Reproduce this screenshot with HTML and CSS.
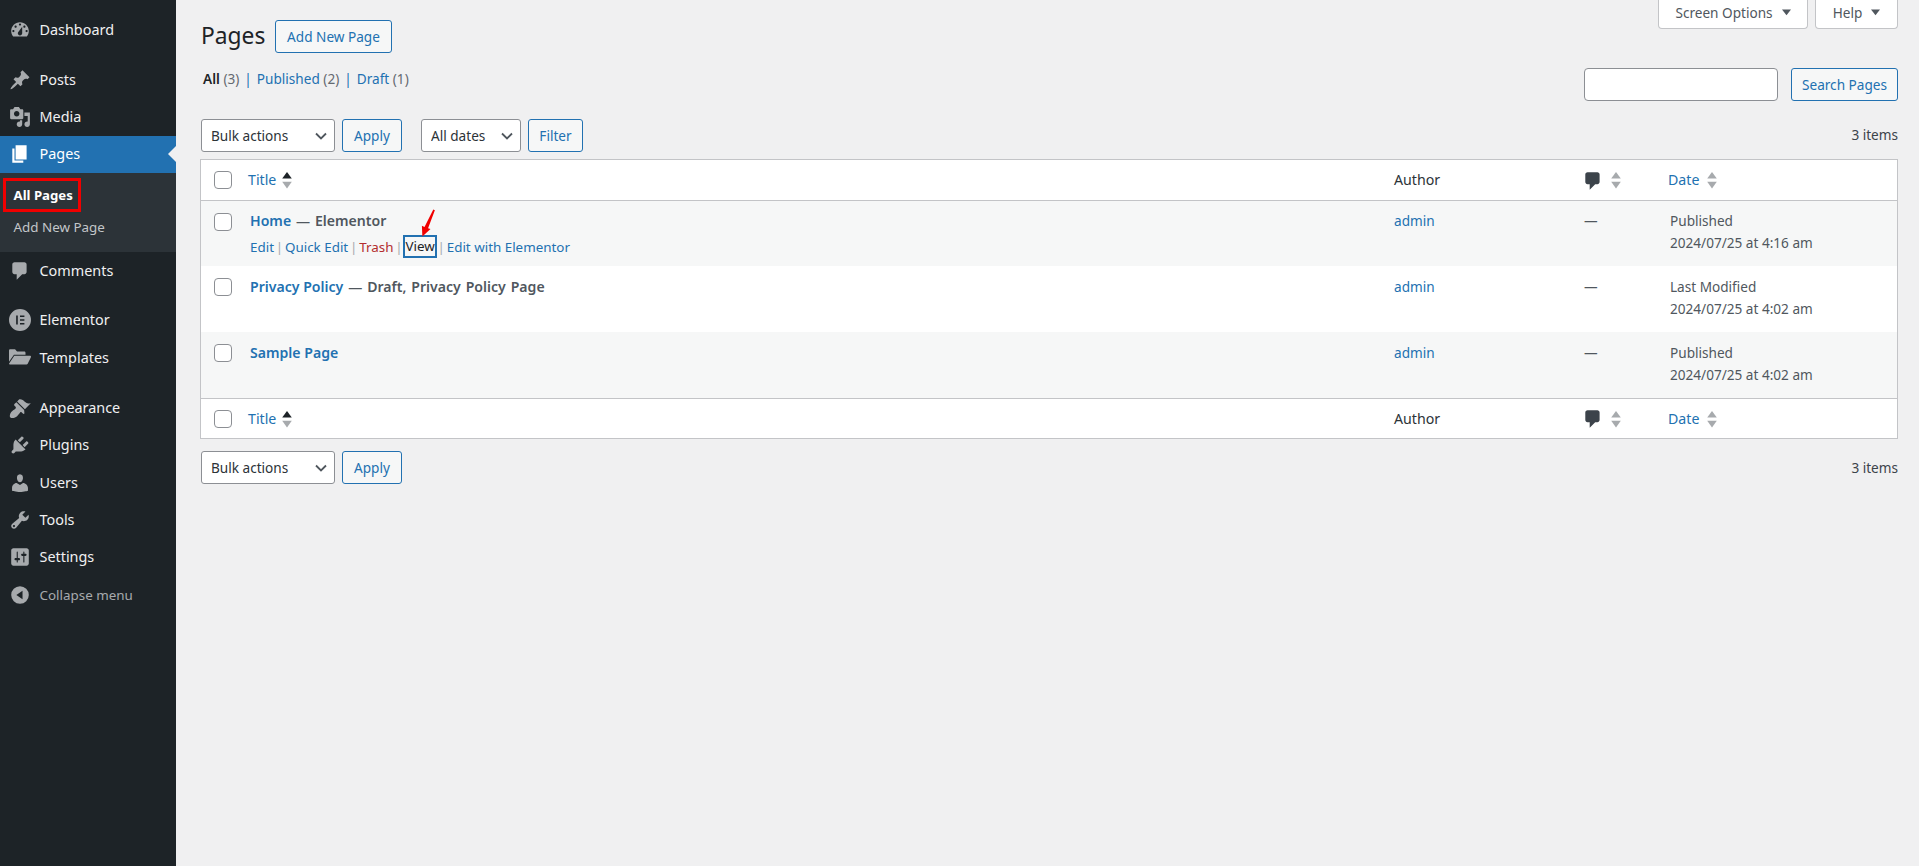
FILE: index.html
```html
<!DOCTYPE html>
<html lang="en">
<head>
<meta charset="utf-8">
<title>Pages</title>
<link rel="stylesheet" href="styles.css">
</head>
<body>
<svg class="sprite" aria-hidden="true">
  <symbol id="i-dash" viewBox="0 0 20 20"><path fill-rule="evenodd" d="M3.76 16h12.48c1.1-1.37 1.76-3.11 1.76-5 0-4.42-3.58-8-8-8s-8 3.58-8 8c0 1.89.66 3.63 1.76 5zM10 4c.55 0 1 .45 1 1s-.45 1-1 1-1-.45-1-1 .45-1 1-1zM6 6c.55 0 1 .45 1 1s-.45 1-1 1-1-.45-1-1 .45-1 1-1zm8 0c.55 0 1 .45 1 1s-.45 1-1 1-1-.45-1-1 .45-1 1-1zm-5.37 5.55L12 7v6c0 1.1-.9 2-2 2s-2-.9-2-2c0-.57.24-1.08.63-1.45zM4 10c.55 0 1 .45 1 1s-.45 1-1 1-1-.45-1-1 .45-1 1-1zm12 0c.55 0 1 .45 1 1s-.45 1-1 1-1-.45-1-1 .45-1 1-1z"/></symbol>
  <symbol id="i-post" viewBox="0 0 20 20"><path d="M10.44 3.02l1.82-1.82 6.36 6.35-1.83 1.82c-1.05-.68-2.48-.57-3.41.36l-.75.75c-.92.93-1.04 2.35-.35 3.41l-1.83 1.82-2.41-2.41-2.8 2.79c-.42.42-3.38 2.71-3.8 2.29s1.86-3.39 2.28-3.81l2.79-2.79L4.1 9.36l1.83-1.82c1.05.69 2.48.57 3.4-.36l.75-.75c.93-.92 1.05-2.35.36-3.41z"/></symbol>
  <symbol id="i-media" viewBox="0 0 20 20"><path fill-rule="evenodd" d="M13 11V4c0-.55-.45-1-1-1h-1.67L9 1H5L3.67 3H2c-.55 0-1 .45-1 1v7c0 .55.45 1 1 1h10c.55 0 1-.45 1-1zM7 4.500c1.380 0 2.500 1.120 2.500 2.500S8.380 9.500 7 9.500 4.500 8.380 4.500 7 5.620 4.500 7 4.500zM14 6h5v10.500c0 1.380-1.120 2.500-2.500 2.500S14 17.880 14 16.500s1.120-2.500 2.500-2.500c.17 0 .34.020.5.050V9h-3V6zm-4 8.050V13h2v3.500c0 1.380-1.120 2.500-2.500 2.500S7 17.880 7 16.500 8.120 14 9.500 14c.17 0 .34.020.5.050z"/></symbol>
  <symbol id="i-page" viewBox="0 0 20 20"><path d="M6 15V2h10v13H6zm-1 1h8v2H3V5h2v11z"/></symbol>
  <symbol id="i-comment" viewBox="0 0 20 20"><path d="M5 2h9c1.100 0 2 .9 2 2v7c0 1.100-.9 2-2 2h-2l-5 5v-5H5c-1.100 0-2-.9-2-2V4c0-1.100.9-2 2-2z"/></symbol>
  <symbol id="i-elementor" viewBox="0 0 20 20"><path fill-rule="evenodd" d="M10 0a10 10 0 1 0 0 20a10 10 0 0 0 0-20zM6.500 5.800H8v8.400H6.500zM10 5.800h4v1.500h-4zM10 9.250h4v1.500h-4zM10 12.700h4v1.500h-4z"/></symbol>
  <symbol id="i-folder" viewBox="0 0 20 20"><path d="M0 3.200c0-.7.500-1.200 1.200-1.200h4.300l1.800 2h6.500c.7 0 1.200.5 1.200 1.200V7H4.500L0 13.500zM4.800 8H19c.8 0 1.200.7.900 1.300L17 15.300c-.2.400-.6.700-1.100.7H0.800c-.6 0-1-.6-.7-1.100z"/></symbol>
  <symbol id="i-brush" viewBox="0 0 20 20"><path d="M14.480 11.060L7.410 3.990l1.500-1.500c.5-.56 2.300-.47 3.510.32 1.210.8 1.430 1.280 2.910 2.100 1.180.64 2.450 1.260 4.450.85zm-.71.71L6.700 4.700 4.930 6.470c-.39.39-.39 1.020 0 1.410l1.060 1.060c.39.39.39 1.030 0 1.420-.6.600-1.430 1.110-2.210 1.690-.35.260-.7.530-1.010.840C1.430 13.710 0 17.380 1.310 18.690c1.310 1.300 4.980-.12 6.300-1.460.31-.31.58-.66.84-1.010.58-.78 1.090-1.610 1.690-2.210.39-.39 1.030-.39 1.420 0l1.060 1.060c.39.39 1.020.39 1.410 0z"/></symbol>
  <symbol id="i-plug" viewBox="0 0 20 20"><path d="M13.110 4.360L9.870 7.600 8 5.730l3.240-3.240c.35-.34 1.050-.2 1.560.32.52.51.66 1.210.31 1.550zm-8 1.770l.91-1.120 9.010 9.010-1.190.84c-.71.71-2.630 1.160-3.820 1.160H6.140L4.900 17.260c-.59.59-1.540.59-2.120 0-.59-.58-.59-1.530 0-2.120l1.240-1.240v-3.880c0-1.130.4-3.180 1.090-3.890zm7.260 3.970l3.240-3.240c.34-.35 1.040-.21 1.550.31.52.51.66 1.210.31 1.550l-3.240 3.250z"/></symbol>
  <symbol id="i-user" viewBox="0 0 20 20"><path d="M10 9.250c-2.270 0-2.730-3.440-2.730-3.440C7 4.020 7.820 2 9.960 2c2.160 0 2.980 2.020 2.710 3.810 0 0-.41 3.440-2.670 3.440zm0 2.570L12.720 10c2.390 0 4.520 2.330 4.520 4.530v2.490s-3.650 1.130-7.240 1.130c-3.650 0-7.240-1.130-7.240-1.130v-2.490c0-2.250 1.940-4.480 4.150-4.480z"/></symbol>
  <symbol id="i-tool" viewBox="0 0 20 20"><path fill-rule="evenodd" d="M16.680 9.770c-1.340 1.340-3.300 1.670-4.950.99l-5.410 6.520c-.99.99-2.590.99-3.580 0s-.99-2.590 0-3.570l6.520-5.420c-.68-1.650-.35-3.610.99-4.950 1.280-1.280 3.120-1.620 4.720-1.060l-2.890 2.890 2.820 2.820 2.860-2.870c.53 1.590.18 3.400-1.080 4.650zM3.810 16.210c.4.390 1.030.39 1.430 0 .4-.4.400-1.030 0-1.430-.4-.39-1.030-.39-1.430 0-.39.4-.39 1.030 0 1.430z"/></symbol>
  <symbol id="i-settings" viewBox="0 0 20 20"><path fill-rule="evenodd" d="M18 16V4c0-1.100-.9-2-2-2H4c-1.100 0-2 .9-2 2v12c0 1.100.9 2 2 2h12c1.100 0 2-.9 2-2zM8 11h1c.55 0 1 .45 1 1s-.45 1-1 1H8v1.500c0 .28-.22.5-.5.5s-.5-.22-.5-.5V13H6c-.55 0-1-.45-1-1s.45-1 1-1h1V5.500c0-.28.22-.5.5-.5s.5.22.5.5V11zm5-2h-1c-.55 0-1-.45-1-1s.45-1 1-1h1V5.500c0-.28.22-.5.5-.5s.5.22.5.5V7h1c.55 0 1 .45 1 1s-.45 1-1 1h-1v5.500c0 .28-.22.5-.5.5s-.5-.22-.5-.5V9z"/></symbol>
  <symbol id="i-collapse" viewBox="0 0 20 20"><path fill-rule="evenodd" d="M10 2a8 8 0 1 0 0 16a8 8 0 0 0 0-16zM12.300 13.800L6.700 10l5.600-3.800z"/></symbol>
  <symbol id="i-sort" viewBox="0 0 9 16"><path class="up" d="M4.500 0L9 6.200H0z"/><path class="down" d="M0 9.200h9L4.500 15.500z"/></symbol>
  <symbol id="i-caret" viewBox="0 0 12 8"><path d="M0 0h12L6 7.500z"/></symbol>
</svg>

<div class="app">
  <nav class="sidebar">
    <a class="item"><svg class="ic"><use href="#i-dash"/></svg>Dashboard</a>
    <div class="sep"></div>
    <a class="item"><svg class="ic"><use href="#i-post"/></svg>Posts</a>
    <a class="item"><svg class="ic"><use href="#i-media"/></svg>Media</a>
    <a class="item active"><svg class="ic"><use href="#i-page"/></svg>Pages<span class="notch"></span></a>
    <div class="submenu">
      <a class="sub current">All Pages</a>
      <a class="sub">Add New Page</a>
    </div>
    <a class="item"><svg class="ic"><use href="#i-comment"/></svg>Comments</a>
    <div class="sep"></div>
    <a class="item"><svg class="ic"><use href="#i-elementor"/></svg>Elementor</a>
    <a class="item"><svg class="ic"><use href="#i-folder"/></svg>Templates</a>
    <div class="sep"></div>
    <a class="item"><svg class="ic"><use href="#i-brush"/></svg>Appearance</a>
    <a class="item"><svg class="ic"><use href="#i-plug"/></svg>Plugins</a>
    <a class="item"><svg class="ic"><use href="#i-user"/></svg>Users</a>
    <a class="item"><svg class="ic"><use href="#i-tool"/></svg>Tools</a>
    <a class="item"><svg class="ic"><use href="#i-settings"/></svg>Settings</a>
    <a class="item collapse"><svg class="ic"><use href="#i-collapse"/></svg>Collapse menu</a>
  </nav>

  <main class="main">
    <header class="top">
      <div class="heading">
        <h1>Pages</h1>
        <a class="btn add">Add New Page</a>
      </div>
      <div class="tabs">
        <a class="tab tab-screen">Screen Options<svg class="caret"><use href="#i-caret"/></svg></a>
        <a class="tab tab-help">Help<svg class="caret"><use href="#i-caret"/></svg></a>
      </div>
    </header>

    <div class="filters">
      <ul class="subsub">
        <li><b>All</b> <span>(3)</span></li>
        <li class="bar">|</li>
        <li><a>Published</a> <span>(2)</span></li>
        <li class="bar">|</li>
        <li><a>Draft</a> <span>(1)</span></li>
      </ul>
      <form class="search">
        <input type="text" class="search-input" aria-label="Search Pages">
        <a class="btn">Search Pages</a>
      </form>
    </div>

    <div class="tablenav upper">
      <select class="select sel-bulk"><option>Bulk actions</option></select>
      <a class="btn apply">Apply</a>
      <select class="select sel-dates"><option>All dates</option></select>
      <a class="btn filter">Filter</a>
      <span class="count">3 items</span>
    </div>

    <table class="list">
      <colgroup>
        <col class="c-cb"><col><col class="c-author"><col class="c-comments"><col class="c-date">
      </colgroup>
      <thead>
        <tr>
          <td class="cb"><input type="checkbox" class="check" aria-label="Select all"></td>
          <th class="h-title"><a>Title</a><svg class="sort active-up"><use href="#i-sort"/></svg></th>
          <th class="h-plain">Author</th>
          <th class="h-plain"><svg class="bubble"><use href="#i-comment"/></svg><svg class="sort"><use href="#i-sort"/></svg></th>
          <th class="h-date"><a>Date</a><svg class="sort"><use href="#i-sort"/></svg></th>
        </tr>
      </thead>
      <tbody>
        <tr class="alt first">
          <td class="cb"><input type="checkbox" class="check" aria-label="Select Home"></td>
          <td class="title">
            <div class="name"><a>Home</a> — Elementor</div>
            <div class="actions">
              <a>Edit</a><i>|</i><a>Quick Edit</a><i>|</i><a class="trash">Trash</a><i>|</i><a class="view">View<svg class="arrow" viewBox="0 0 16 30"><path d="M14.200 0.500L15.900 1.400 8.600 20.500 11.200 21.500 2.500 29.500 2 18 4.800 19.200z"/></svg></a><i>|</i><a>Edit with Elementor</a>
            </div>
          </td>
          <td><a>admin</a></td>
          <td>—</td>
          <td class="date">Published<br>2024/07/25 at 4:16 am</td>
        </tr>
        <tr>
          <td class="cb"><input type="checkbox" class="check" aria-label="Select Privacy Policy"></td>
          <td class="title"><div class="name"><a>Privacy Policy</a> — Draft, Privacy Policy Page</div></td>
          <td><a>admin</a></td>
          <td>—</td>
          <td class="date">Last Modified<br>2024/07/25 at 4:02 am</td>
        </tr>
        <tr class="alt">
          <td class="cb"><input type="checkbox" class="check" aria-label="Select Sample Page"></td>
          <td class="title"><div class="name"><a>Sample Page</a></div></td>
          <td><a>admin</a></td>
          <td>—</td>
          <td class="date">Published<br>2024/07/25 at 4:02 am</td>
        </tr>
      </tbody>
      <tfoot>
        <tr>
          <td class="cb"><input type="checkbox" class="check" aria-label="Select all"></td>
          <th class="h-title"><a>Title</a><svg class="sort active-up"><use href="#i-sort"/></svg></th>
          <th class="h-plain">Author</th>
          <th class="h-plain"><svg class="bubble"><use href="#i-comment"/></svg><svg class="sort"><use href="#i-sort"/></svg></th>
          <th class="h-date"><a>Date</a><svg class="sort"><use href="#i-sort"/></svg></th>
        </tr>
      </tfoot>
    </table>

    <div class="tablenav lower">
      <select class="select sel-bulk"><option>Bulk actions</option></select>
      <a class="btn apply">Apply</a>
      <span class="count">3 items</span>
    </div>
  </main>
</div>
</body>
</html>
```

FILE: styles.css
```css
* { box-sizing: border-box; }
html, body { margin: 0; height: 100%; }
body {
  background: #f0f0f1;
  color: #3c434a;
  font-family: "Noto Sans", "Open Sans", "Liberation Sans", sans-serif;
  font-size: 13.6px;
  line-height: 22px;
  overflow: hidden;
}
a { color: #2271b1; text-decoration: none; }
.sprite { display: none; }
.app { display: flex; min-height: 866px; }

/* sidebar */
.sidebar {
  width: 176px;
  flex: none;
  background: #1d2327;
  padding-top: 11px;
  display: flex;
  flex-direction: column;
}
.item {
  position: relative;
  display: flex;
  align-items: center;
  height: 37.4px;
  padding-left: 9px;
  color: #f0f0f1;
  font-size: 14.4px;
}
.ic { width: 22px; height: 22px; margin-right: 8.500px; fill: #a7aaad; flex: none; }
.sep { height: 12.5px; }
.active { background: #2271b1; color: #fff; }
.active .ic { fill: #fff; }
.notch {
  position: absolute;
  right: 0;
  top: 10.5px;
  border: 8.5px solid transparent;
  border-right-color: #f0f0f1;
  border-left-width: 0;
}
.submenu {
  background: #2c3338;
  padding: 5.3px 0 9.5px;
  display: flex;
  flex-direction: column;
}
.sub {
  display: block;
  height: 30px;
  line-height: 30px;
  padding-left: 13.5px;
  color: #c3c6c9;
  font-size: 13.4px;
}
.current {
  width: 78px;
  height: 34px;
  margin-left: 3px;
  padding-left: 7.5px;
  line-height: 29.500px;
  border: 3px solid #f00000;
  color: #fff;
  font-weight: 700;
  font-size: 13.2px;
}
.collapse { color: #a7aaad; font-size: 13.4px; }

/* main */
.main { flex: 1; min-width: 0; padding: 0 21px 0 25px; }
.top { display: flex; justify-content: space-between; align-items: flex-start; height: 53px; }
.heading { display: flex; align-items: center; gap: 10px; padding-top: 20px; }
h1 {
  margin: 0 0 2px;
  font-size: 22.8px;
  font-weight: 400;
  color: #1d2327;
  line-height: 31px;
  width: 64px;
}
.tabs { display: flex; gap: 7px; }
.tab {
  display: flex;
  align-items: center;
  justify-content: center;
  gap: 9px;
  height: 29px;
  padding-bottom: 3px;
  background: #fff;
  border: 1px solid #c3c4c7;
  border-top: 0;
  border-radius: 0 0 4px 4px;
  color: #50575e;
}
.tab-screen { width: 150px; }
.tab-help { width: 83px; }
.caret { width: 9px; height: 7px; fill: #50575e; }

.btn {
  display: inline-flex;
  align-items: center;
  justify-content: center;
  height: 33px;
  border: 1px solid #2271b1;
  border-radius: 3px;
  background: #f6f7f7;
  color: #2271b1;
  white-space: nowrap;
}
.add { width: 117px; }

.filters { display: flex; justify-content: space-between; align-items: flex-start; margin-top: 15px; }
.subsub {
  list-style: none;
  display: flex;
  margin: 0;
  padding: 0 0 0 2px;
  gap: 5px;
  color: #646970;
}
.subsub b { color: #1d2327; font-weight: 600; }
.bar { color: #2271b1; }
.search { display: flex; gap: 13px; margin: 0; }
.search-input {
  width: 194px;
  height: 33px;
  border: 1px solid #8c8f94;
  border-radius: 4px;
  background: #fff;
}
.search .btn { width: 107px; }

.tablenav { display: flex; align-items: center; gap: 7px; height: 33px; }
.upper { margin-top: 18px; margin-bottom: 7px; }
.lower { margin-top: 12px; }
.select {
  appearance: none;
  height: 33px;
  border: 1px solid #8c8f94;
  border-radius: 3px;
  padding: 0 26px 0 9px;
  font: inherit;
  color: #2c3338;
  background: #fff url("data:image/svg+xml;utf8,<svg xmlns='http://www.w3.org/2000/svg' viewBox='0 0 12 8'><path d='M1 1.500l5 5 5-5' fill='none' stroke='%2350575e' stroke-width='1.800'/></svg>") no-repeat right 7px center / 12px 8px;
}
.sel-bulk { width: 134px; }
.sel-dates { width: 100px; margin-left: 12px; }
.apply { width: 60px; }
.filter { width: 55px; }
.count { margin-left: auto; padding-bottom: 2px; color: #3c434a; }
.lower .count { padding-bottom: 0; }

/* table */
.list {
  width: calc(100% + 1px);
  margin-left: -1px;
  table-layout: fixed;
  border-collapse: separate;
  border-spacing: 0;
  background: #fff;
  border: 1px solid #c3c4c7;
}
.c-cb { width: 37px; }
.c-author { width: 190px; }
.c-comments { width: 84px; }
.c-date { width: 239px; }
thead td, thead th { height: 41px; border-bottom: 1px solid #c3c4c7; }
tfoot td, tfoot th { height: 40px; border-top: 1px solid #c3c4c7; }
th { font-weight: 400; font-size: 14.2px; text-align: left; padding: 0 10px; color: #2c3338; white-space: nowrap; }
th svg { vertical-align: middle; }
th a { vertical-align: middle; }
tbody td { height: 66px; padding: 10px 10px 0; vertical-align: top; color: #50575e; }
thead td, tfoot td { vertical-align: middle; }
td.cb { padding: 0 0 0 13px; }
tbody td.cb { padding-top: 12px; }
tbody tr.first td { height: 65px; padding-top: 9px; }
tbody tr.first td.cb { padding-top: 12px; }
.alt td { background: #f6f7f7; }
.check {
  appearance: none;
  display: block;
  width: 18px;
  height: 18px;
  margin: 0;
  border: 1px solid #8c8f94;
  border-radius: 4px;
  background: #fff;
}
.sort { width: 10px; height: 17px; margin-left: 6px; fill: #a7aaad; --up: #a7aaad; }
.up { fill: var(--up); }
.active-up { --up: #1d2327; }
.bubble { width: 22px; height: 22px; margin-left: -2px; fill: #3c434a; }
.h-plain .sort { margin-left: 7px; }
.h-date .sort { margin-left: 8px; }
td.title { padding-left: 12px; }
td.date { padding-left: 12px; }
.name { font-weight: 600; color: #50575e; font-size: 14.1px; word-spacing: 1.2px; }
.name a { font-weight: 600; word-spacing: 0; }
.actions { display: flex; align-items: center; margin-top: 3px; font-size: 13.4px; }
.actions i { font-style: normal; color: #a7aaad; margin: 0 1.800px; }
.trash { color: #b32d2e; }
.view {
  position: relative;
  color: #1d2327;
  border: 2px solid #2271b1;
  margin: 0 -1px;
  padding: 0;
  line-height: 19px;
}
.arrow { position: absolute; left: 15px; top: -28px; width: 15px; height: 28px; fill: #f00000; }
```
